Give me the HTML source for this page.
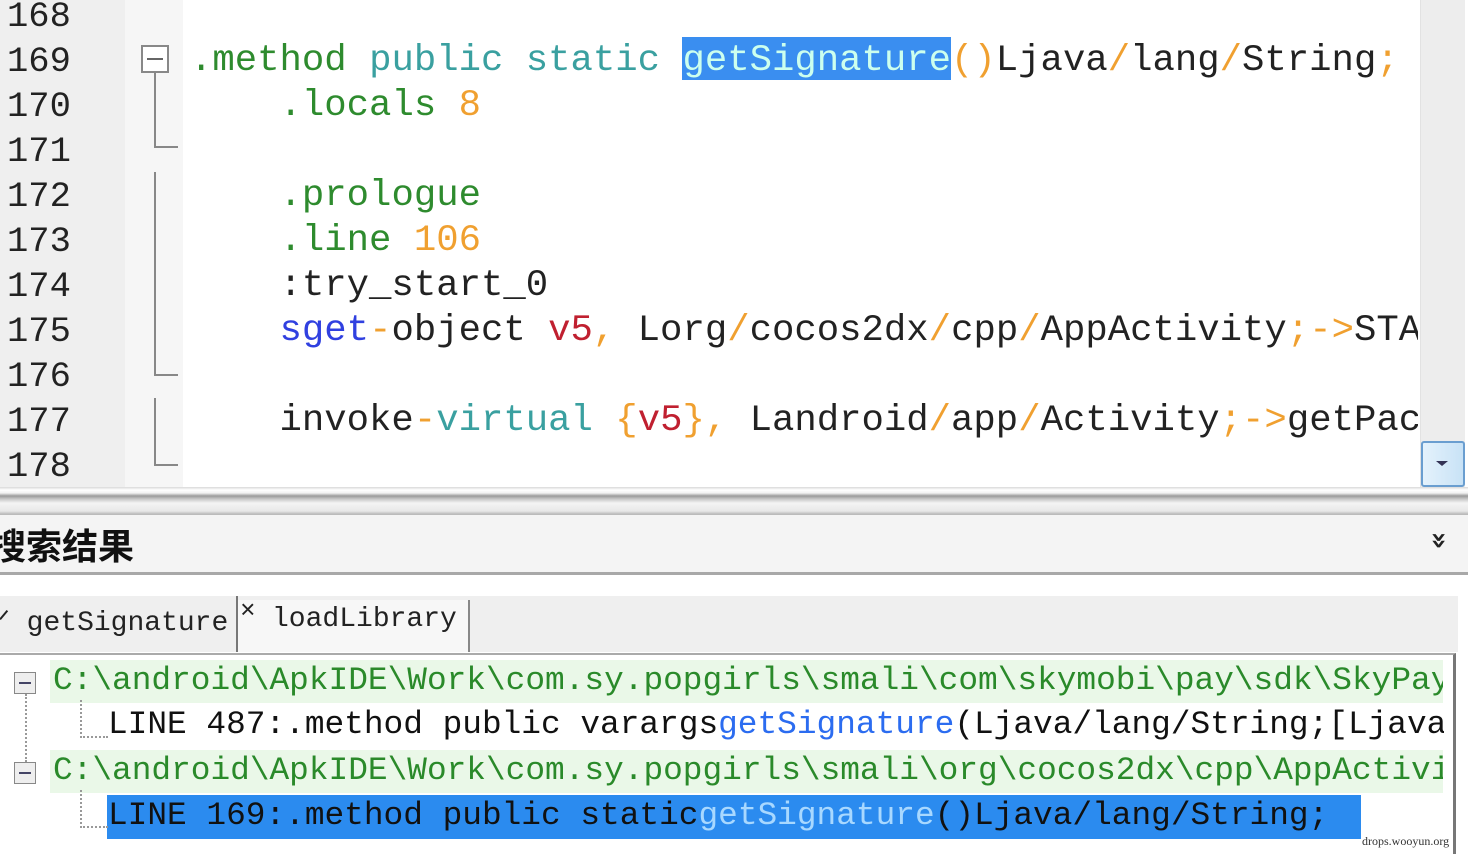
<!DOCTYPE html>
<html><head><meta charset="utf-8"><style>
body{margin:0;width:1468px;height:854px;overflow:hidden;background:#fff;position:relative;font-family:"Liberation Mono",monospace}
.a{position:absolute;white-space:pre}
.ln{left:7px;font-size:35.5px;color:#222;font-family:"Liberation Mono",monospace}
.code{left:190px;font-size:37.3px;color:#222;width:1228px;overflow:hidden}
.g{color:#2e8b2e}.t{color:#3aa0a0}.o{color:#f0a030}.b{color:#3040e0}.r{color:#c02030}
.tr{font-family:"Liberation Mono",monospace;font-size:32.8px;white-space:pre;position:absolute}
</style></head><body>
<div class="a" style="left:0;top:0;width:125px;height:487px;background:#efefef"></div>
<div class="a" style="left:125px;top:0;width:58px;height:487px;background:#f6f6f6"></div>
<div class="a ln" style="top:-4px">168</div>
<div class="a ln" style="top:41px">169</div>
<div class="a ln" style="top:86px">170</div>
<div class="a ln" style="top:131px">171</div>
<div class="a ln" style="top:176px">172</div>
<div class="a ln" style="top:221px">173</div>
<div class="a ln" style="top:266px">174</div>
<div class="a ln" style="top:311px">175</div>
<div class="a ln" style="top:356px">176</div>
<div class="a ln" style="top:401px">177</div>
<div class="a ln" style="top:446px">178</div>
<div class="a" style="left:141px;top:45px;width:28px;height:28px;border:2px solid #888;box-sizing:border-box;background:#fff"></div>
<div class="a" style="left:147px;top:58px;width:16px;height:2px;background:#666"></div>
<div class="a" style="left:154px;top:73px;width:2px;height:75px;background:#888"></div>
<div class="a" style="left:154px;top:146px;width:24px;height:2px;background:#888"></div>
<div class="a" style="left:154px;top:172px;width:2px;height:204px;background:#888"></div>
<div class="a" style="left:154px;top:374px;width:24px;height:2px;background:#888"></div>
<div class="a" style="left:154px;top:398px;width:2px;height:68px;background:#888"></div>
<div class="a" style="left:154px;top:464px;width:24px;height:2px;background:#888"></div>
<div class="a" style="left:682px;top:37px;width:269px;height:43px;background:#3a8ef0"></div>
<div class="a code" style="top:40px"><span class="g">.method</span> <span class="t">public static</span> <span style="color:#cfe">getSignature</span><span class="o">()</span>Ljava<span class="o">/</span>lang<span class="o">/</span>String<span class="o">;</span></div>
<div class="a code" style="top:85px">    <span class="g">.locals</span> <span class="o">8</span></div>
<div class="a code" style="top:175px">    <span class="g">.prologue</span></div>
<div class="a code" style="top:220px">    <span class="g">.line</span> <span class="o">106</span></div>
<div class="a code" style="top:265px">    :try_start_0</div>
<div class="a code" style="top:310px">    <span class="b">sget</span><span class="o">-</span>object <span class="r">v5</span><span class="o">,</span> Lorg<span class="o">/</span>cocos2dx<span class="o">/</span>cpp<span class="o">/</span>AppActivity<span class="o">;-&gt;</span>STATIC</div>
<div class="a code" style="top:400px">    invoke<span class="o">-</span><span class="t">virtual</span> <span class="o">{</span><span class="r">v5</span><span class="o">},</span> Landroid<span class="o">/</span>app<span class="o">/</span>Activity<span class="o">;-&gt;</span>getPackage</div>
<div class="a" style="left:1420px;top:0;width:44px;height:487px;background:#ededed;border-left:1px solid #e2e2e2"></div>
<div class="a" style="left:1421px;top:441px;width:40px;height:42px;border:2px solid #6a9ed0;border-radius:3px;background:linear-gradient(90deg,#e4f2fc,#c8e2f6)"></div>
<div class="a" style="left:1436px;top:461px;width:0;height:0;border-left:6px solid transparent;border-right:6px solid transparent;border-top:5px solid #335"></div>
<div class="a" style="left:0;top:487px;width:1468px;height:28px;background:linear-gradient(#d8d8d8 0,#fff 3px,#f2f2f2 6px,#9a9a9a 9px,#c8c8c8 12px,#f4f4f4 16px,#e8e8e8 24px,#bbb 27px)"></div>
<div class="a" style="left:0;top:515px;width:1468px;height:57px;background:#f4f4f4;border-bottom:3px solid #a8a8a8"></div>
<div class="a" style="left:-10px;top:518px;font-family:'Noto Sans CJK SC',sans-serif;font-weight:bold;font-size:36px;color:#111">搜索结果</div>
<div class="a" style="left:1431px;top:524px;font-size:28px;font-weight:bold;color:#222;font-family:'DejaVu Sans',sans-serif;transform:rotate(90deg)">»</div>
<div class="a" style="left:0;top:575px;width:1468px;height:279px;background:#fff"></div>
<div class="a" style="left:0;top:596px;width:1458px;height:56px;background:#efefef"></div>
<div class="tr" style="left:-2px;top:604px;font-size:28px;color:#222">ᐟ getSignature</div>
<div class="a" style="left:236px;top:596px;width:2px;height:56px;background:#777"></div>
<div class="a" style="left:238px;top:600px;width:230px;height:52px;background:#f7f7f7;border-right:2px solid #888"></div>
<div class="tr" style="left:240px;top:596px;font-size:26px;color:#222">×</div>
<div class="tr" style="left:272px;top:604px;font-size:28px;color:#222">loadLibrary</div>
<div class="a" style="left:0;top:653px;width:1456px;height:201px;border-top:2px solid #aaa;border-right:3px solid #777;box-sizing:border-box"></div>
<div class="a" style="left:50px;top:660px;width:1393px;height:43px;background:#eaf8e8"></div>
<div class="a" style="left:50px;top:750px;width:1393px;height:43px;background:#eaf8e8"></div>
<div class="a" style="left:107px;top:795px;width:1254px;height:44px;background:#2b8bef"></div>
<div class="a" style="left:14px;top:672px;width:22px;height:22px;border:1px solid #888;background:#eee;box-sizing:border-box"></div>
<div class="a" style="left:19px;top:682px;width:12px;height:2px;background:#446"></div>
<div class="a" style="left:14px;top:762px;width:22px;height:22px;border:1px solid #888;background:#eee;box-sizing:border-box"></div>
<div class="a" style="left:19px;top:772px;width:12px;height:2px;background:#446"></div>
<div class="a" style="left:25px;top:694px;height:68px;border-left:2px dotted #999"></div>
<div class="a" style="left:80px;top:700px;height:36px;width:26px;border-left:2px dotted #999;border-bottom:2px dotted #999"></div>
<div class="a" style="left:80px;top:790px;height:36px;width:26px;border-left:2px dotted #999;border-bottom:2px dotted #999"></div>
<div class="a" style="left:50px;top:660px;width:1393px;height:43px;overflow:hidden"><div class="tr" style="left:3px;top:2px;color:#2a8a2a">C:\android\ApkIDE\Work\com.sy.popgirls\smali\com\skymobi\pay\sdk\SkyPay</div></div>
<div class="tr" style="left:108px;top:706px;color:#111;width:1336px;overflow:hidden">LINE 487:.method public varargs<span style="color:#2b6cf0">getSignature</span>(Ljava/lang/String;[Ljava</div>
<div class="a" style="left:50px;top:750px;width:1393px;height:43px;overflow:hidden"><div class="tr" style="left:3px;top:2px;color:#2a8a2a">C:\android\ApkIDE\Work\com.sy.popgirls\smali\org\cocos2dx\cpp\AppActivity</div></div>
<div class="tr" style="left:108px;top:797px;color:#111">LINE 169:.method public static<span style="color:#a8d8ff">getSignature</span>()Ljava/lang/String;</div>
<div class="a" style="left:1362px;top:834px;font-family:'Liberation Serif',serif;font-size:12px;color:#333">drops.wooyun.org</div>
</body></html>
